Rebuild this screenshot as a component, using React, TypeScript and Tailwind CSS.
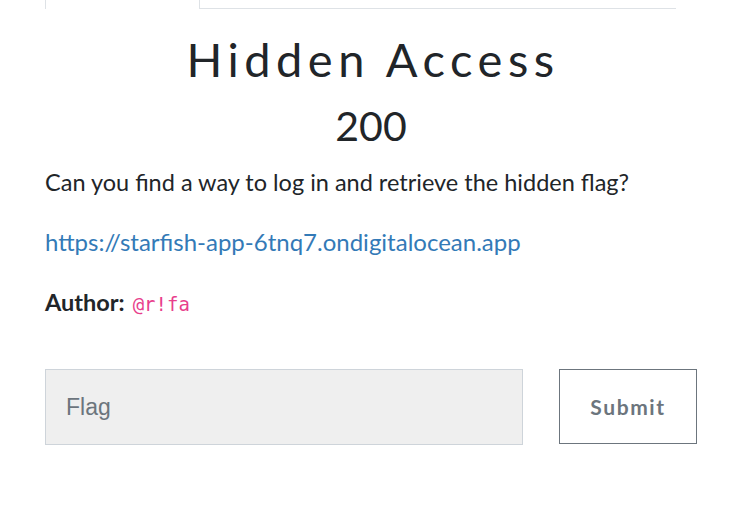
import React from "react";

export default function App() {
  return (
    <div className="w-[742px] h-[514px] bg-white text-[#212529] overflow-hidden" style={{ fontFamily: "Lato, 'Liberation Sans', sans-serif" }}>
      <div className="ml-[45px] w-[631px] h-[9px] flex border-b border-[#dee2e6]">
        <div className="w-[155px] h-[9px] border-x border-[#dee2e6] bg-white -mb-px"></div>
      </div>
      <h2 className="mt-[22px] pl-[4px] text-center text-[47px] leading-[56px] font-normal tracking-[5.5px]">Hidden Access</h2>
      <h3 className="mt-[15px] text-center text-[41px] leading-[48px] font-normal">200</h3>
      <div className="px-[45px] text-[23.5px] leading-[35px]">
        <p className="mt-[15px]">Can you find a way to log in and retrieve the hidden flag?</p>
        <p className="mt-[24px]"><a className="text-[#337ab7] text-[24px]" href="#">https://starfish-app-6tnq7.ondigitalocean.app</a></p>
        <p className="mt-[25px]"><span className="font-bold">Author:</span> <code className="text-[#e83e8c] text-[19px] ml-[2px]" style={{ fontFamily: "'DejaVu Sans Mono', monospace" }}>@r!fa</code></p>
      </div>
      <div className="mt-[47px] ml-[45px] flex items-start">
        <div className="w-[478px] h-[76px] bg-[#efefef] border border-[#ced4da] flex items-center pl-[20px] text-[23px] text-[#6c757d]" style={{ fontFamily: "'Liberation Sans', Arial, sans-serif" }}>Flag</div>
        <button className="ml-[36px] w-[138px] h-[75px] border border-[#6c757d] text-[#6c757d] font-bold text-[21px] tracking-[1.6px] bg-white">Submit</button>
      </div>
    </div>
  );
}
